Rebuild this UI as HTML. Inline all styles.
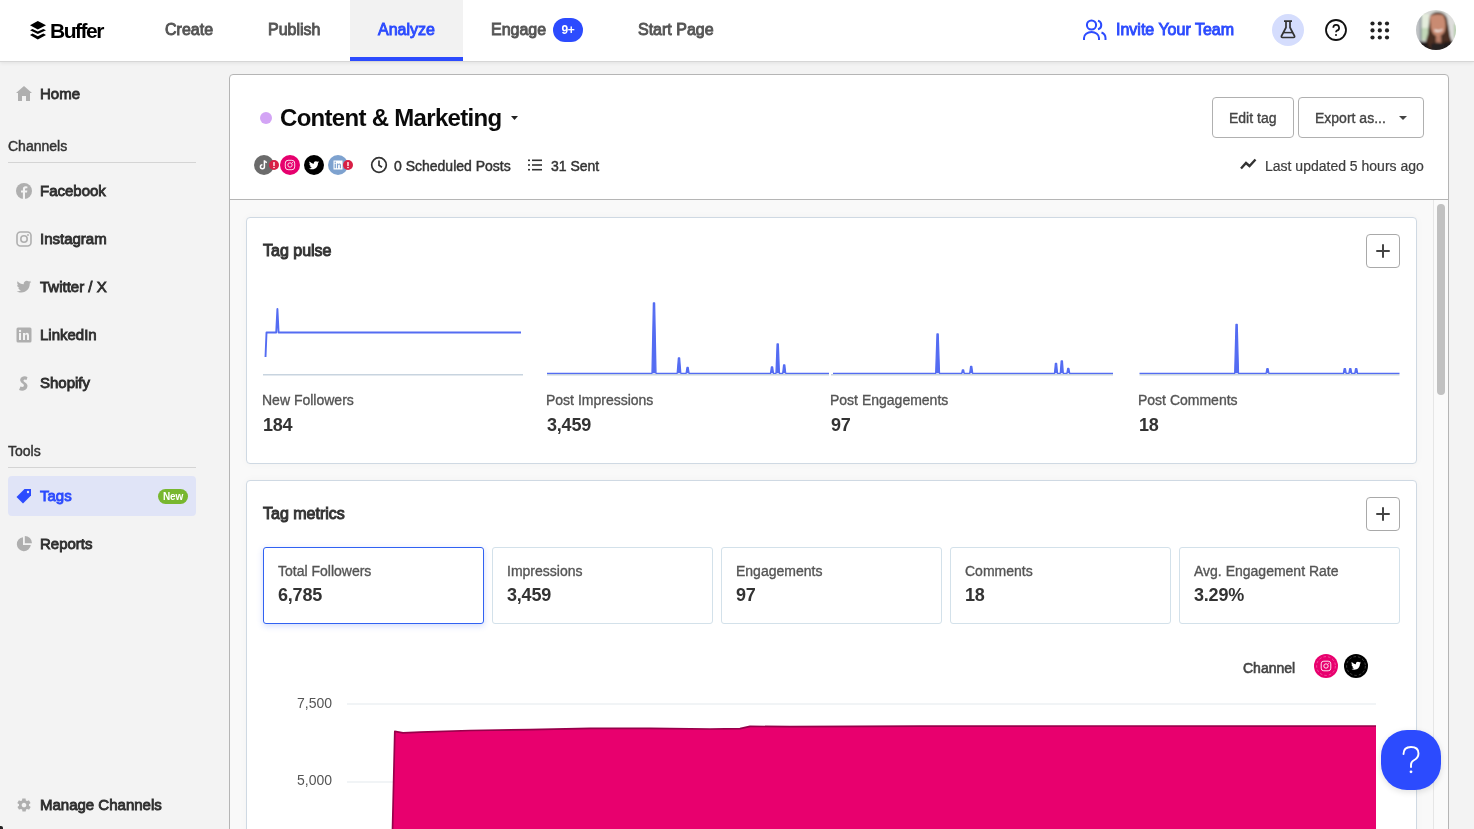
<!DOCTYPE html>
<html><head><meta charset="utf-8">
<style>
*{box-sizing:border-box;margin:0;padding:0}
html,body{width:1474px;height:829px;overflow:hidden}
body>*{will-change:transform}
body{position:relative;background:#f3f3f3;font-family:"Liberation Sans",sans-serif;color:#333}
.a{position:absolute;white-space:nowrap}
#hdr{position:absolute;left:0;top:0;width:1474px;height:62px;background:#fff;border-bottom:1px solid #d6d6d6;box-shadow:0 1px 4px rgba(0,0,0,0.08);z-index:5}
.nav{position:absolute;top:21px;font-size:16px;font-weight:400;color:#555;letter-spacing:0px;line-height:18px;-webkit-text-stroke:0.9px currentColor}
.side{position:absolute;left:40px;font-size:15px;font-weight:400;color:#2e2e2e;line-height:17px;letter-spacing:0px;-webkit-text-stroke:0.85px currentColor}
.sico{position:absolute;left:16px}
.shd{position:absolute;left:8px;font-size:14px;color:#333;line-height:16px;-webkit-text-stroke:0.45px currentColor}
.sdiv{position:absolute;left:8px;width:188px;height:1px;background:#d4d4d4}
#panel{position:absolute;left:229px;top:74px;width:1220px;height:800px;background:#fff;border:1px solid #b5b5b5;border-radius:4px 4px 0 0;overflow:hidden}
#scroll{position:absolute;left:0;top:124px;width:1218px;height:700px;background:#f9f9f9;border-top:1px solid #b5b5b5}
.card{position:absolute;background:#fff;border:1px solid #cfd9e3;border-radius:4px}
.btn{position:absolute;border:1px solid #b0b0b0;border-radius:4px;background:#fff;font-size:14px;color:#444;line-height:16px;-webkit-text-stroke:0.35px currentColor}
.plus{position:absolute;width:34px;height:34px;border:1px solid #a9a9a9;border-radius:4px;background:#fff}
.plus:before,.plus:after{content:"";position:absolute;background:#444;left:9px;top:15px;width:14px;height:2px;border-radius:1px}
.plus:after{left:15px;top:9px;width:2px;height:14px}
.lbl{position:absolute;font-size:14px;color:#555;line-height:16px;-webkit-text-stroke:0.35px currentColor}
.val{position:absolute;font-size:18px;font-weight:700;color:#333;line-height:20px;letter-spacing:-0.2px}
.mbox{position:absolute;top:66px;width:221px;height:77px;border:1px solid #d3e1ea;border-radius:3px;background:#fff}
.mbox .lbl{left:14px;top:15px}
.mbox .val{left:14px;top:37px}
</style></head><body>

<!-- HEADER -->
<div id="hdr">
  <svg class="a" style="left:30px;top:21px" width="16" height="19" viewBox="0 0 16 19">
    <path d="M7.8 0 L16 4.3 L7.8 8.4 L0 4.3 Z" fill="#000"/>
    <path d="M0 9.3 L2.5 8 L7.8 10.6 L13.3 8 L16 9.3 L7.8 13.1 Z" fill="#000"/>
    <path d="M0 13.9 L2.5 12.6 L7.8 15.3 L13.3 12.6 L16 13.9 L7.8 18.4 Z" fill="#000"/>
  </svg>
  <div class="a" style="left:50px;top:19px;font-size:21px;font-weight:700;color:#000;letter-spacing:-1.5px;line-height:24px">Buffer</div>

  <div class="nav" style="left:165px">Create</div>
  <div class="nav" style="left:268px">Publish</div>
  <div class="a" style="left:350px;top:0;width:113px;height:61px;background:#f2f2f2;border-bottom:4px solid #2c4bfe"></div>
  <div class="nav" style="left:378px;color:#2c4bfe">Analyze</div>
  <div class="nav" style="left:491px">Engage</div>
  <div class="a" style="left:553px;top:18px;width:30px;height:24px;border-radius:12px;background:#2c4bfe;color:#fff;font-size:12px;font-weight:700;line-height:24px;text-align:center;letter-spacing:-0.3px">9+</div>
  <div class="nav" style="left:638px">Start Page</div>

  <svg class="a" style="left:1083px;top:19px" width="24" height="22" viewBox="0 0 24 22">
    <circle cx="8.5" cy="6" r="4.6" fill="none" stroke="#2c4bfe" stroke-width="2"/>
    <path d="M1 21 V19 A7.5 6 0 0 1 16 19 V21" fill="none" stroke="#2c4bfe" stroke-width="2"/>
    <path d="M15 1.6 A4.6 4.6 0 0 1 15 10.4" fill="none" stroke="#2c4bfe" stroke-width="2"/>
    <path d="M18.5 13.5 A6 6 0 0 1 22.5 19 V21" fill="none" stroke="#2c4bfe" stroke-width="2"/>
  </svg>
  <div class="nav" style="left:1116px;color:#2c4bfe">Invite Your Team</div>

  <div class="a" style="left:1272px;top:14px;width:32px;height:32px;border-radius:50%;background:#d5ddfd"></div>
  <svg class="a" style="left:1279px;top:20px" width="18" height="20" viewBox="0 0 18 20">
    <path d="M5 1.2 H13 M7 1.2 V7.5 L2.5 16 Q2 17.5 3.5 17.5 H14.5 Q16 17.5 15.5 16 L11 7.5 V1.2" fill="none" stroke="#333" stroke-width="1.7" stroke-linejoin="round"/>
    <path d="M4.5 12.6 H13.5" stroke="#333" stroke-width="1.5"/>
  </svg>
  <svg class="a" style="left:1324px;top:18px" width="24" height="24" viewBox="0 0 24 24">
    <circle cx="12" cy="12" r="10" fill="none" stroke="#111" stroke-width="1.8"/>
    <path d="M9.3 9.8 A2.9 2.9 0 1 1 12.9 12.6 Q12 13 12 14.2" fill="none" stroke="#111" stroke-width="1.7"/>
    <circle cx="12" cy="16.9" r="1" fill="#111"/>
  </svg>
  <svg class="a" style="left:1370px;top:20.7px" width="20" height="20" viewBox="0 0 20 20" fill="#222">
    <circle cx="2.5" cy="2.5" r="2.1"/><circle cx="9.8" cy="2.5" r="2.1"/><circle cx="17" cy="2.5" r="2.1"/>
    <circle cx="2.5" cy="9.4" r="2.1"/><circle cx="9.8" cy="9.4" r="2.1"/><circle cx="17" cy="9.4" r="2.1"/>
    <circle cx="2.5" cy="16.5" r="2.1"/><circle cx="9.8" cy="16.5" r="2.1"/><circle cx="17" cy="16.5" r="2.1"/>
  </svg>
  <svg class="a" style="left:1416px;top:10px" width="40" height="40" viewBox="0 0 40 40">
    <defs><clipPath id="av"><circle cx="20" cy="20" r="20"/></clipPath>
    <filter id="bl" x="-10%" y="-10%" width="120%" height="120%"><feGaussianBlur stdDeviation="0.9"/></filter></defs>
    <g clip-path="url(#av)"><g filter="url(#bl)">
      <rect x="-2" y="-2" width="44" height="44" fill="#d6d8d4"/>
      <rect x="-2" y="-2" width="7" height="44" fill="#bfc2c4"/>
      <rect x="5" y="4" width="8" height="26" fill="#e4ecdc"/>
      <rect x="5" y="18" width="8" height="12" fill="#c2d8b8"/>
      <rect x="4" y="5" width="1.5" height="26" fill="#7a8590"/>
      <rect x="31" y="0" width="8" height="32" fill="#dededc"/>
      <rect x="38" y="14" width="4" height="14" fill="#b4ccaa"/>
      <path d="M6 42 Q10 32 12 24 Q13 12 14 6 Q17 2 22 2 Q28 2 31 8 Q33 18 34 26 Q37 33 38 42 Z" fill="#4a2f20"/>
      <path d="M14 6 Q20 3 27 5 Q30 10 29.5 17 Q29 25 22 26.5 Q16 25 15 18 Q14 11 14 6 Z" fill="#c98b72"/>
      <path d="M20 26 H25 V33 H20 Z" fill="#b97e68"/>
      <path d="M18.5 20 Q22.5 22.5 26.5 19.5" stroke="#f2ece8" stroke-width="1.5" fill="none"/>
      <path d="M-2 42 L1 32 Q6 31 11 32 L16 42 Z" fill="#231d1b"/>
      <path d="M28 32 Q35 31 41 32 L42 42 L26 42 Z" fill="#231d1b"/>
      <path d="M15 34 Q22 31 28 34 L28 42 L15 42 Z" fill="#262020"/>
    </g></g>
  </svg>
</div>

<!-- SIDEBAR -->
<svg class="sico" style="top:86px" width="16" height="15" viewBox="0 0 16 15"><path d="M8 0 L16 7 H14 V15 H10 V10 H6 V15 H2 V7 H0 Z" fill="#afafaf"/></svg>
<div class="side" style="top:85px">Home</div>
<div class="shd" style="top:138px">Channels</div>
<div class="sdiv" style="top:162px"></div>

<svg class="sico" style="top:183px" width="16" height="16" viewBox="0 0 16 16"><circle cx="8" cy="8" r="8" fill="#afafaf"/><path d="M9 16 V9.5 H11 L11.3 7.5 H9 V6.2 Q9 5.3 10 5.3 H11.4 V3.5 Q10.5 3.3 9.6 3.3 Q6.9 3.3 6.9 6 V7.5 H5 V9.5 H6.9 V16 Z" fill="#f3f3f3"/></svg>
<div class="side" style="top:182px">Facebook</div>

<svg class="sico" style="top:231px" width="16" height="16" viewBox="0 0 16 16"><rect x="1" y="1" width="14" height="14" rx="3.5" fill="none" stroke="#afafaf" stroke-width="1.6"/><circle cx="8" cy="8" r="3.2" fill="none" stroke="#afafaf" stroke-width="1.6"/><circle cx="12" cy="4" r="0.9" fill="#afafaf"/></svg>
<div class="side" style="top:230px">Instagram</div>

<svg class="sico" style="top:279px" width="16" height="16" viewBox="0 0 24 24"><path d="M23 4.6c-.8.4-1.7.6-2.6.7.9-.6 1.6-1.4 2-2.5-.9.5-1.9.9-2.9 1.1C18.6 3 17.4 2.5 16.1 2.5c-2.5 0-4.5 2-4.5 4.5 0 .4 0 .7.1 1C7.9 7.8 4.6 6 2.4 3.3c-.4.7-.6 1.4-.6 2.3 0 1.6.8 2.9 2 3.8-.7 0-1.4-.2-2-.6v.1c0 2.2 1.6 4 3.6 4.4-.4.1-.8.2-1.2.2-.3 0-.6 0-.8-.1.6 1.8 2.2 3.1 4.2 3.1-1.5 1.2-3.5 1.9-5.6 1.9-.4 0-.7 0-1.1-.1 2 1.3 4.4 2 6.9 2 8.3 0 12.8-6.9 12.8-12.8v-.6c.9-.6 1.6-1.4 2.4-2.3z" fill="#afafaf"/></svg>
<div class="side" style="top:278px">Twitter / X</div>

<svg class="sico" style="top:327px" width="16" height="16" viewBox="0 0 16 16"><rect x="0.5" y="0.5" width="15" height="15" rx="1.5" fill="#afafaf"/><rect x="3" y="6" width="2" height="7" fill="#f3f3f3"/><circle cx="4" cy="4" r="1.2" fill="#f3f3f3"/><path d="M7 6 H9 V7 Q9.8 5.8 11.2 5.8 Q13 5.8 13 8.3 V13 H11 V8.8 Q11 7.6 10.1 7.6 Q9 7.6 9 8.9 V13 H7 Z" fill="#f3f3f3"/></svg>
<div class="side" style="top:326px">LinkedIn</div>

<svg class="sico" style="top:375px" width="16" height="16" viewBox="0 0 16 16"><path d="M11.5 2.2 Q9.5 0.8 7 1.5 Q3.8 2.5 4.2 5.5 Q4.5 7.5 6.8 8.8 Q8.3 9.7 7.8 11 Q7.2 12.4 4.5 11.6 L3 15 Q6.5 16.5 9.4 14.8 Q12 13 11.3 10 Q10.8 8.3 8.8 7.2 Q7.2 6.3 7.6 5.2 Q8.2 4 10.5 5 Z" fill="#afafaf"/></svg>
<div class="side" style="top:374px">Shopify</div>

<div class="shd" style="top:443px">Tools</div>
<div class="sdiv" style="top:467px"></div>
<div class="a" style="left:8px;top:476px;width:188px;height:40px;border-radius:4px;background:#e0e4f7"></div>
<svg class="sico" style="top:488px" width="16" height="16" viewBox="0 0 16 16"><path d="M0.5 9 L8.5 1 H15 V7.5 L7 15.5 Z" fill="#2c4bfe"/><circle cx="12" cy="4" r="1.2" fill="#e0e4f7"/></svg>
<div class="side" style="top:487px;color:#2c4bfe">Tags</div>
<div class="a" style="left:158px;top:489px;width:30px;height:15px;border-radius:8px;background:#78b72f;color:#fff;font-size:10px;font-weight:700;line-height:15px;text-align:center;letter-spacing:-0.2px">New</div>

<svg class="sico" style="top:536px" width="16" height="16" viewBox="0 0 16 16"><path d="M7 1.2 A7 7 0 1 0 14.8 9 H7 Z" fill="#afafaf"/><path d="M8.8 0 A7.2 7.2 0 0 1 16 7.2 H8.8 Z" fill="#afafaf"/></svg>
<div class="side" style="top:535px">Reports</div>

<svg class="sico" style="top:797px" width="16" height="16" viewBox="0 0 24 24"><path d="M19.4 13c.1-.3.1-.7.1-1s0-.7-.1-1l2.1-1.6c.2-.2.2-.4.1-.6l-2-3.5c-.1-.2-.4-.3-.6-.2l-2.5 1c-.5-.4-1.1-.7-1.7-1l-.4-2.6c0-.2-.2-.4-.5-.4h-4c-.2 0-.5.2-.5.4l-.4 2.6c-.6.3-1.2.6-1.7 1l-2.5-1c-.2-.1-.5 0-.6.2l-2 3.5c-.1.2-.1.5.1.6L4.6 11c0 .3-.1.7-.1 1s0 .7.1 1l-2.1 1.6c-.2.2-.2.4-.1.6l2 3.5c.1.2.4.3.6.2l2.5-1c.5.4 1.1.7 1.7 1l.4 2.6c0 .2.2.4.5.4h4c.2 0 .5-.2.5-.4l.4-2.6c.6-.3 1.2-.6 1.7-1l2.5 1c.2.1.5 0 .6-.2l2-3.5c.1-.2.1-.5-.1-.6L19.4 13zM12 15.5c-1.9 0-3.5-1.6-3.5-3.5s1.6-3.5 3.5-3.5 3.5 1.6 3.5 3.5-1.6 3.5-3.5 3.5z" fill="#afafaf"/></svg>
<div class="side" style="top:796px">Manage Channels</div>

<!-- MAIN PANEL -->
<div id="panel">
  <div class="a" style="left:30px;top:37px;width:12px;height:12px;border-radius:50%;background:#d3a4f5"></div>
  <div class="a" style="left:50px;top:29px;font-size:24px;font-weight:700;color:#0a0a0a;letter-spacing:-0.7px;line-height:28px">Content &amp; Marketing</div>
  <svg class="a" style="left:281px;top:41px" width="7" height="4" viewBox="0 0 7 4"><path d="M0 0 H7 L3.5 4 Z" fill="#222"/></svg>

  <!-- channel avatars -->
  <svg class="a" style="left:24px;top:80px" width="20" height="20" viewBox="0 0 20 20"><circle cx="10" cy="10" r="10" fill="#6b6b6b"/><path d="M10.4 5.3 V11.8 A2 2 0 1 1 8.4 9.8 M10.4 5.3 Q10.8 7.1 12.9 7.4" fill="none" stroke="#fff" stroke-width="1.5"/></svg>
  <svg class="a" style="left:50px;top:80px" width="20" height="20" viewBox="0 0 20 20"><circle cx="10" cy="10" r="10" fill="#e6006e"/><rect x="5.3" y="5.3" width="9.4" height="9.4" rx="2.8" fill="none" stroke="#fff" stroke-width="0.85"/><circle cx="10" cy="10" r="2.2" fill="none" stroke="#fff" stroke-width="0.85"/><circle cx="12.6" cy="7.4" r="0.5" fill="#fff"/></svg>
  <svg class="a" style="left:74px;top:80px" width="20" height="20" viewBox="0 0 20 20"><circle cx="10" cy="10" r="10" fill="#000"/><g transform="translate(4.5 5) scale(0.46)"><path d="M23 4.6c-.8.4-1.7.6-2.6.7.9-.6 1.6-1.4 2-2.5-.9.5-1.9.9-2.9 1.1C18.6 3 17.4 2.5 16.1 2.5c-2.5 0-4.5 2-4.5 4.5 0 .4 0 .7.1 1C7.9 7.8 4.6 6 2.4 3.3c-.4.7-.6 1.4-.6 2.3 0 1.6.8 2.9 2 3.8-.7 0-1.4-.2-2-.6v.1c0 2.2 1.6 4 3.6 4.4-.4.1-.8.2-1.2.2-.3 0-.6 0-.8-.1.6 1.8 2.2 3.1 4.2 3.1-1.5 1.2-3.5 1.900-5.6 1.9-.4 0-.7 0-1.1-.1 2 1.3 4.4 2 6.9 2 8.3 0 12.8-6.9 12.8-12.8v-.6c.9-.6 1.6-1.4 2.4-2.3z" fill="#fff"/></g></svg>
  <svg class="a" style="left:98px;top:80px" width="20" height="20" viewBox="0 0 20 20"><circle cx="10" cy="10" r="10" fill="#7ea2cf"/><rect x="5.5" y="5.5" width="9" height="9" fill="#fff"/><rect x="6.6" y="8.6" width="1.3" height="4.6" fill="#7ea2cf"/><rect x="6.6" y="6.6" width="1.3" height="1.3" fill="#7ea2cf"/><path d="M8.9 8.6 H10.1 V9.3 Q10.6 8.5 11.6 8.5 Q13 8.5 13 10.3 V13.2 H11.8 V10.6 Q11.8 9.6 11.1 9.6 Q10.1 9.6 10.1 10.7 V13.2 H8.9 Z" fill="#7ea2cf"/></svg>
  <svg class="a" style="left:39px;top:85px" width="10" height="10" viewBox="0 0 10 10"><circle cx="5" cy="5" r="5" fill="#d81f45"/><rect x="4.3" y="2" width="1.4" height="4" rx="0.5" fill="#fff"/><rect x="4.3" y="6.9" width="1.4" height="1.2" fill="#fff"/></svg>
  <svg class="a" style="left:113px;top:85px" width="10" height="10" viewBox="0 0 10 10"><circle cx="5" cy="5" r="5" fill="#d81f45"/><rect x="4.3" y="2" width="1.4" height="4" rx="0.5" fill="#fff"/><rect x="4.3" y="6.9" width="1.4" height="1.2" fill="#fff"/></svg>

  <svg class="a" style="left:140px;top:81px" width="18" height="18" viewBox="0 0 18 18"><circle cx="9" cy="9" r="7.3" fill="none" stroke="#333" stroke-width="1.7"/><path d="M9 4.6 V9.2 L12 11.2" fill="none" stroke="#333" stroke-width="1.7"/></svg>
  <div class="a" style="left:164px;top:83px;font-size:14px;color:#333;line-height:16px;-webkit-text-stroke:0.45px currentColor">0 Scheduled Posts</div>
  <svg class="a" style="left:297px;top:82px" width="16" height="16" viewBox="0 0 16 16" fill="#333"><rect x="1" y="2.5" width="2" height="1.6"/><rect x="5" y="2.5" width="10" height="1.6"/><rect x="1" y="7.2" width="2" height="1.6"/><rect x="5" y="7.2" width="10" height="1.6"/><rect x="1" y="11.9" width="2" height="1.6"/><rect x="5" y="11.9" width="10" height="1.6"/></svg>
  <div class="a" style="left:321px;top:83px;font-size:14px;color:#333;line-height:16px;-webkit-text-stroke:0.45px currentColor">31 Sent</div>

  <div class="btn" style="left:982px;top:22px;width:82px;height:41px"><span class="a" style="left:16px;top:12px">Edit tag</span></div>
  <div class="btn" style="left:1068px;top:22px;width:126px;height:41px"><span class="a" style="left:16px;top:12px">Export as...</span><svg class="a" style="left:100px;top:17.5px" width="8" height="4" viewBox="0 0 8 4"><path d="M0 0 H8 L4 4 Z" fill="#444"/></svg></div>
  <svg class="a" style="left:1010px;top:83px" width="17" height="12" viewBox="0 0 17 12"><path d="M1 10.5 L6 5 L9.5 8 L15.5 1.5" fill="none" stroke="#333" stroke-width="2.4" stroke-linejoin="miter"/></svg>
  <div class="a" style="left:1035px;top:82.5px;font-size:14px;color:#3d3d3d;line-height:16px;-webkit-text-stroke:0.2px currentColor">Last updated 5 hours ago</div>

  <div id="scroll">
    <div class="a" style="left:1203px;top:0;width:15px;height:700px;background:#fafafa;border-left:1px solid #e6e6e6"></div>
    <div class="a" style="left:1207px;top:4px;width:8px;height:191px;border-radius:4px;background:#c1c1c1"></div>

    <div class="card" style="left:16px;top:17px;width:1171px;height:247px;box-shadow:0 0 8px rgba(0,0,0,0.03)">
      <div class="a" style="left:16px;top:24px;font-size:16px;font-weight:400;color:#333;line-height:18px;-webkit-text-stroke:1px currentColor">Tag pulse</div>
      <div class="plus" style="left:1119px;top:16px"></div>
      <div class="lbl" style="left:15px;top:174px">New Followers</div>
      <div class="val" style="left:16px;top:197px">184</div>
      <div class="lbl" style="left:299px;top:174px">Post Impressions</div>
      <div class="val" style="left:300px;top:197px">3,459</div>
      <div class="lbl" style="left:583px;top:174px">Post Engagements</div>
      <div class="val" style="left:584px;top:197px">97</div>
      <div class="lbl" style="left:891px;top:174px">Post Comments</div>
      <div class="val" style="left:892px;top:197px">18</div>
    </div>

    <div class="card" style="left:16px;top:280px;width:1171px;height:600px;box-shadow:0 0 8px rgba(0,0,0,0.03)">
      <div class="a" style="left:16px;top:24px;font-size:16px;font-weight:400;color:#333;line-height:18px;-webkit-text-stroke:1px currentColor">Tag metrics</div>
      <div class="plus" style="left:1119px;top:16px"></div>
      <div class="mbox" style="left:16px;border:1px solid #3162f2;box-shadow:0 2px 6px rgba(44,90,240,0.22)"><div class="lbl">Total Followers</div><div class="val">6,785</div></div>
      <div class="mbox" style="left:245px"><div class="lbl">Impressions</div><div class="val">3,459</div></div>
      <div class="mbox" style="left:474px"><div class="lbl">Engagements</div><div class="val">97</div></div>
      <div class="mbox" style="left:703px"><div class="lbl">Comments</div><div class="val">18</div></div>
      <div class="mbox" style="left:932px"><div class="lbl">Avg. Engagement Rate</div><div class="val">3.29%</div></div>

      <div class="a" style="left:996px;top:179px;font-size:14px;font-weight:400;color:#444;line-height:16px;-webkit-text-stroke:0.6px currentColor">Channel</div>
      <svg class="a" style="left:1067px;top:173px" width="24" height="24" viewBox="0 0 24 24"><circle cx="12" cy="12" r="12" fill="#e8006e"/><circle cx="12" cy="12" r="9.4" fill="none" stroke="#fff" stroke-width="0.55" stroke-dasharray="2.6 2" opacity="0.55"/><rect x="7.2" y="7.2" width="9.6" height="9.6" rx="2.6" fill="none" stroke="#fff" stroke-width="0.9"/><circle cx="12" cy="12" r="2.2" fill="none" stroke="#fff" stroke-width="0.9"/><circle cx="14.7" cy="9.3" r="0.5" fill="#fff"/></svg>
      <svg class="a" style="left:1097px;top:173px" width="24" height="24" viewBox="0 0 24 24"><circle cx="12" cy="12" r="12" fill="#000"/><circle cx="12" cy="12" r="9.4" fill="none" stroke="#fff" stroke-width="0.55" stroke-dasharray="2.6 2" opacity="0.45"/><g transform="translate(6.7 6.6) scale(0.45)"><path d="M23 4.6c-.8.4-1.7.6-2.6.7.9-.6 1.6-1.4 2-2.5-.9.5-1.9.9-2.9 1.1C18.6 3 17.4 2.5 16.1 2.5c-2.5 0-4.5 2-4.5 4.5 0 .4 0 .7.1 1C7.9 7.8 4.6 6 2.4 3.3c-.4.7-.6 1.4-.6 2.3 0 1.6.8 2.9 2 3.8-.7 0-1.4-.2-2-.6v.1c0 2.2 1.6 4 3.6 4.4-.4.1-.8.2-1.2.2-.3 0-.6 0-.8-.1.6 1.8 2.2 3.1 4.2 3.1-1.5 1.2-3.5 1.9-5.6 1.9-.4 0-.7 0-1.1-.1 2 1.3 4.4 2 6.9 2 8.3 0 12.8-6.9 12.8-12.8v-.6c.9-.6 1.6-1.4 2.4-2.3z" fill="#fff"/></g></svg>

      <div class="a" style="left:50px;top:214px;font-size:14px;color:#555;line-height:16px">7,500</div>
      <div class="a" style="left:50px;top:291px;font-size:14px;color:#555;line-height:16px">5,000</div>
    </div>
  </div>
</div>

<!-- charts overlay (page coords) -->
<svg class="a" style="left:0;top:0;z-index:3" width="1474" height="829" viewBox="0 0 1474 829">
  <g stroke="#c8d4df" stroke-width="1.5" fill="none">
    <path d="M263 374.8 H523"/><path d="M547 374.8 H829"/><path d="M831 374.8 H1113"/><path d="M1139.5 374.8 H1399.5"/>
  </g>
  <g stroke="#546cf2" stroke-width="1.3" fill="#546cf2" stroke-linejoin="round">
    <path d="M265.5 357 L266.5 332.5 L276.2 332.5 L277.4 309 L278.6 332.5 L521 332.5" fill="none" stroke-width="1.9"/>
    <path d="M547 373.3 L652.0 373.3 L653.4 303 L654.6 303 L656.0 373.3 L677.2 373.3 L678.4 358 L679.6 358 L680.8 373.3 L686.1 373.3 L687.0 367.5 L688.2 367.5 L689.1 373.3 L770.5 373.3 L771.4 367 L772.6 367 L773.5 373.3 L776.0 373.3 L777.1 344 L778.3 344 L779.4 373.3 L782.7 373.3 L783.6 365 L784.8 365 L785.7 373.3 L829 373.3"/>
    <path d="M833 373.3 L935.7 373.3 L937.0 334 L938.2 334 L939.5 373.3 L961.7 373.3 L962.4 370 L963.6 370 L964.3 373.3 L969.7 373.3 L970.6 366.5 L971.8 366.5 L972.7 373.3 L1054.5 373.3 L1055.4 363.5 L1056.6 363.5 L1057.5 373.3 L1060.3 373.3 L1061.2 361 L1062.4 361 L1063.3 373.3 L1066.9 373.3 L1067.7 368.5 L1068.9 368.5 L1069.7 373.3 L1113 373.3"/>
    <path d="M1139.5 373.3 L1234.7 373.3 L1236.0 324.4 L1237.2 324.4 L1238.5 373.3 L1266.1 373.3 L1266.9 368.7 L1268.1 368.7 L1268.9 373.3 L1343.4 373.3 L1344.2 368.7 L1345.4 368.7 L1346.2 373.3 L1348.9 373.3 L1349.7 368.7 L1350.9 368.7 L1351.7 373.3 L1354.8 373.3 L1355.6 368.7 L1356.8 368.7 L1357.6 373.3 L1399.5 373.3"/>
  </g>
  <g stroke="#edf0f3" stroke-width="1.5"><path d="M347 704 H1376"/><path d="M347 782 H1376"/></g>
  <path d="M390 938 L394.8 731.4 L403 732.8 L420 732.1 L470 730.5 L530 729.6 L590 728.3 L650 728.3 L710 729 L740 728.7 L750 726.4 L790 726.6 L920 726.1 L1100 726 L1300 726.1 L1376 726 L1376 938 Z" fill="#e8006e"/>
  <path d="M390 938 L394.8 731.4 L403 732.8 L420 732.1 L470 730.5 L530 729.6 L590 728.3 L650 728.3 L710 729 L740 728.7 L750 726.4 L790 726.6 L920 726.1 L1100 726 L1300 726.1 L1376 726" fill="none" stroke="#98004b" stroke-width="1.7" stroke-linejoin="round"/>
</svg>

<div class="a" style="left:0;top:826px;width:3px;height:3px;border-radius:0 2px 0 0;background:#222;z-index:8"></div>
<!-- help FAB -->
<div class="a" style="left:1381px;top:730px;width:60px;height:60px;border-radius:26px;background:#2c4bfe;box-shadow:0 2px 6px rgba(0,0,0,0.12);z-index:6"></div>
<svg class="a" style="left:1381px;top:730px;z-index:7" width="60" height="60" viewBox="0 0 60 60"><path d="M22.5 24 Q22.5 17 30 17 Q37.5 17 37.5 23.5 Q37.5 28 32.5 30.5 Q30 31.8 30 35 V37" fill="none" stroke="#fff" stroke-width="1.9" stroke-linecap="round"/><circle cx="30" cy="41.8" r="1.4" fill="#fff"/></svg>

</body></html>
